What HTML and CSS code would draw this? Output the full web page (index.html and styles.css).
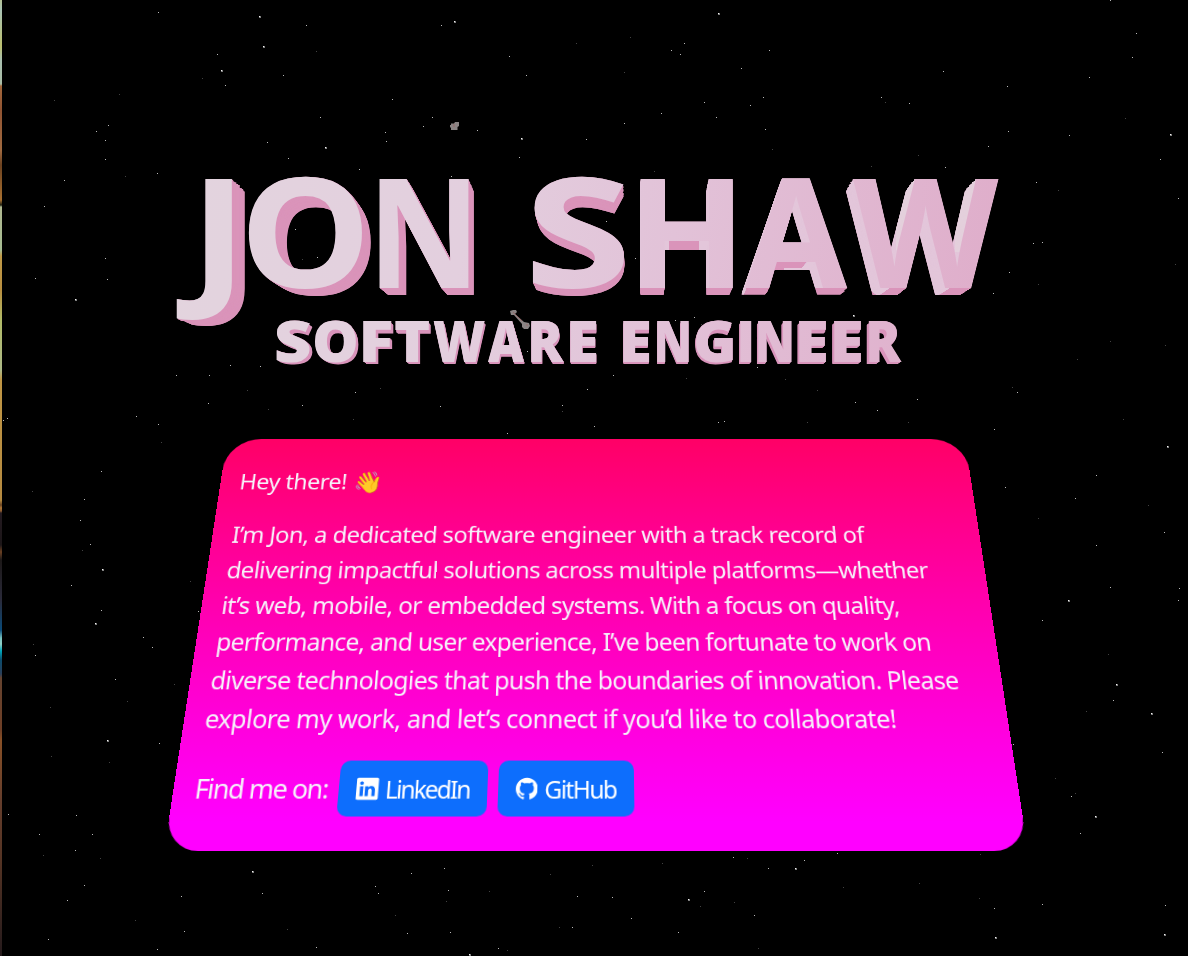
FILE: index.html
```html
<!DOCTYPE html>
<html lang="en">
<head>
<meta charset="utf-8">
<title>Jon Shaw - Software Engineer</title>
<link rel="stylesheet" href="styles.css">
</head>
<body>
<main class="space">
  <svg class="scene" viewBox="0 0 1188 956" width="1188" height="956" role="img" aria-label="JON SHAW SOFTWARE ENGINEER">
    <defs id="defs">
      <linearGradient id="face" gradientUnits="userSpaceOnUse" x1="180" y1="170" x2="1000" y2="300">
        <stop offset="0" stop-color="#e3d4de"/>
        <stop offset=".35" stop-color="#e3cfde"/>
        <stop offset=".6" stop-color="#e2c2d8"/>
        <stop offset="1" stop-color="#dfadca"/>
      </linearGradient>
      <clipPath id="leftFaces">
        <path d="M630 170H1000V241H630ZM630 241H669V288H630ZM699 241H768V288H699ZM768 241H1000V258H768ZM811 258H1000V288H784V268H802ZM704 288H698L700 295ZM746 288H740L743 296ZM791 288H780L783 296ZM889 288H868L878 296ZM949 288H928L937 296Z"/>
      </clipPath>
      <clipPath id="innerFaces">
        <path d="M896 170H928L916 250H896ZM955 170H986L970 252H955Z"/>
      </clipPath>
    </defs>
    <g id="stars" fill="#fff"></g>
    <g id="extrude"></g>
    <g id="extrudeLight" clip-path="url(#leftFaces)"></g>
    <g id="extrudeInner" clip-path="url(#innerFaces)"></g>
    <g id="fronts"></g>
    <g fill="#8b8484">
      <path d="M451 123.500H454L455 122H459V126L457.500 127V130H451V128L450 127V125H451Z"/>
      <path d="M510 311L513 310H516L517 312L515 314L524 322L529 323L530 326L528 329H524L522 327L522 324L514 315H511Z"/>
    </g>
    <path d="M454 124v3M513 312l9 9M526 325h2" stroke="#a05c5c" stroke-width="1" stroke-opacity=".6" fill="none"/>
  </svg>
  <div class="planet-edge"></div>
  <section class="card">
    <p class="line hey"><span class="fit" data-width="123">Hey there!</span> <span class="wave">👋</span></p>
    <div class="about">
      <p class="line"><span class="fit" data-width="712">I’m Jon, a dedicated software engineer with a track record of</span></p>
      <p class="line"><span class="fit" data-width="779">delivering impactful solutions across multiple platforms—whether</span></p>
      <p class="line"><span class="fit" data-width="742">it’s web, mobile, or embedded systems. With a focus on quality,</span></p>
      <p class="line"><span class="fit" data-width="771">performance, and user experience, I’ve been fortunate to work on</span></p>
      <p class="line"><span class="fit" data-width="795">diverse technologies that push the boundaries of innovation. Please</span></p>
      <p class="line"><span class="fit" data-width="725">explore my work, and let’s connect if you’d like to collaborate!</span></p>
    </div>
    <div class="links">
      <span class="find"><span class="fit" data-width="136">Find me on:</span></span>
      <a class="btn">
        <svg class="icon" viewBox="0 0 16 16"><path d="M0 1.146C0 .513.526 0 1.175 0h13.650C15.474 0 16 .513 16 1.146v13.708c0 .633-.526 1.146-1.175 1.146H1.175C.526 16 0 15.487 0 14.854V1.146zm4.943 12.248V6.169H2.542v7.225h2.401zm-1.200-8.212c.837 0 1.358-.554 1.358-1.248-.015-.709-.520-1.248-1.342-1.248-.822 0-1.359.540-1.359 1.248 0 .694.521 1.248 1.327 1.248h.016zm4.908 8.212V9.359c0-.216.016-.432.080-.586.173-.431.568-.878 1.232-.878.869 0 1.216.662 1.216 1.634v3.865h2.401V9.250c0-2.220-1.184-3.252-2.764-3.252-1.274 0-1.845.700-2.165 1.193v.025h-.016l.016-.025V6.169h-2.400c.030.678 0 7.225 0 7.225h2.400z"/></svg>
        <span class="fit" data-width="86.5">LinkedIn</span>
      </a>
      <a class="btn">
        <svg class="icon" viewBox="0 0 16 16"><path d="M8 0C3.580 0 0 3.580 0 8c0 3.540 2.290 6.530 5.470 7.590.4.070.550-.170.550-.380 0-.190-.010-.820-.010-1.490-2.010.370-2.530-.490-2.690-.940-.090-.230-.480-.940-.820-1.130-.280-.150-.680-.520-.010-.530.630-.010 1.080.580 1.230.820.720 1.210 1.870.870 2.330.660.070-.520.280-.870.510-1.070-1.780-.200-3.640-.890-3.640-3.950 0-.870.310-1.590.820-2.150-.080-.200-.360-1.020.080-2.120 0 0 .670-.210 2.200.820.640-.180 1.320-.270 2-.270s1.360.090 2 .270c1.530-1.040 2.200-.820 2.200-.820.440 1.100.160 1.920.080 2.120.510.560.820 1.270.820 2.150 0 3.070-1.870 3.750-3.650 3.950.290.250.540.730.540 1.480 0 1.070-.010 1.930-.010 2.200 0 .210.150.460.550.380A8.010 8.010 0 0 0 16 8c0-4.420-3.580-8-8-8z"/></svg>
        <span class="fit" data-width="73.5">GitHub</span>
      </a>
    </div>
  </section>
</main>
<script src="scene.js"></script>
</body>
</html>
```
FILE: styles.css
```css
html, body { margin: 0; background: #000; }
.space {
  width: 1188px; height: 956px; position: relative; overflow: hidden;
  background: #000; font-family: "Noto Sans", "Open Sans", sans-serif;
}
.scene { position: absolute; left: 0; top: 0; display: block; }
.scene text { font-family: "Open Sans", "Noto Sans", sans-serif; }
.planet-edge {
  position: absolute; left: 0; top: 0; width: 2px; height: 956px;
  background: linear-gradient(#b3c093 0, #a9c3b4 10px, #bcc070 46px, #a9c0b0 60px, #a9bda5 84px,
    #a3683c 86px, #915432 110px, #a06a40 150px, #6c4220 165px, #a87030 200px, #202010 205px,
    #b0b890 207px, #a6bc92 250px, #c09a48 256px, #b98f40 290px, #b2bb68 320px, #adb987 370px,
    #c09645 380px, #b58a40 500px, #6a4522 505px, #b07838 508px, #8a5a30 511px, #231a20 513px,
    #1c1618 545px, #6a4022 552px, #1c1818 560px, #2a2a3a 600px, #0a4a78 630px, #75c0bf 638px,
    #90cfc5 644px, #00a4b8 651px, #0b4c6c 660px, #2a3f5a 674px, #65432f 678px, #6e3f26 730px,
    #885026 740px, #653e2c 800px, #553424 860px, #251a1c 956px);
}
/* The card is tipped back, its lower edge nearest the viewer. */
.card {
  position: absolute; left: 163.600px; top: 439px; width: 864px; height: 470px;
  box-sizing: border-box; padding: 34.500px 22px 0; border-radius: 40px 40px 34px 34px;
  background: linear-gradient(#ff0066, #ff00ff 94%);
  color: #f6f2fa; font-size: 26.600px; line-height: 42.300px;
  transform-origin: 50% 0;
  transform: matrix3d(.8536,0,0,0, 0,.7483,0,-.0003115, 0,0,1,0, 0,0,0,1);
}
.line { margin: 0; height: 42.300px; white-space: nowrap; }
.hey { margin-bottom: 25.600px; }
.wave { font-family: "Noto Color Emoji", sans-serif; font-size: 27px; margin-left: 1px; }
.links { display: flex; align-items: center; margin-top: 23.300px; height: 57px; white-space: nowrap; }
.find { width: 147px; font-size: 27.500px; }
.btn {
  display: flex; align-items: center; gap: 7px; box-sizing: border-box; height: 57px;
  padding: 0 18px; margin-right: 11px; border-radius: 10px; background: #0d6efd; color: #fff;
  font-size: 25px;
}
.icon { width: 22.500px; height: 26px; fill: #fff; flex: none; }
```
FILE: scene.js
```js
const NS = 'http://www.w3.org/2000/svg';
const el = (tag, attrs, parent) => {
  const node = document.createElementNS(NS, tag);
  for (const key in attrs) node.setAttribute(key, attrs[key]);
  parent.appendChild(node);
  return node;
};
const byId = id => document.getElementById(id);

// Stars, as "x,y" pairs grouped by brightness.
const plain = `158,12 306,25 441,25 217,54 283,75 225,85 509,56 526,75 392,99 320,117 432,117 108,125 96,131 423,126 385,132 386,141 477,130 105,140 267,142 105,159 288,158 157,173 64,180 359,169 451,176 519,157 586,139 44,206 105,258 35,278 107,279 295,229 317,257 576,272 176,375 209,375 208,403 230,365 260,366 355,392 302,405 136,416 158,424 7,418 3,420 440,406 507,433 562,405 587,389 527,351
671,50 684,43 680,54 769,50 741,68 943,71 1007,86 1110,0 1136,33 1132,57 1089,77 704,102 661,113 716,117 750,105 763,97 881,97 909,103 624,123 765,129 1008,131 988,146 1069,135 1160,159 945,167 1036,182 1178,198 1033,243 1042,242 1009,272 993,293 606,221 635,258 675,320 694,317 757,367 613,375 855,402 877,410 917,399 1017,392 994,429 718,422 724,421 594,426
101,471 84,499 80,520 90,544 71,585 101,610 143,637 152,647 198,611 35,655 115,679 159,743 8,814 76,815 39,834 92,834 75,850 84,885 67,900 181,896 184,931 48,939 157,949
1096,475 1005,487 1075,498 1164,532 1096,545 1110,587 1179,588 1178,600 1042,620 1113,700 1013,744 1162,752 1071,796 1080,833 994,908 1042,904 1165,905
262,893 316,947 375,886 378,893 407,933 411,873 444,868 448,890 450,932 498,948 572,927 577,896 612,897 631,918 678,932 704,891 754,915 733,857 768,868 804,860 837,853`;
const bright = `259,16 454,21 263,46 221,70 521,138 325,147 75,299 718,13 1170,134 853,315 102,569 95,623 107,740 1167,446 1068,600 1116,684 1151,713 1095,816 995,937 1164,934 252,871 469,954 688,899 795,868`;
const dim = `202,78 316,51 576,43 119,94 54,100 125,176 302,259 247,390 268,409 562,411 353,419 380,388 630,37 624,72 885,102 772,149 1125,118 918,155 871,166 654,171 1058,190 1175,264 1038,284 701,324 686,378 785,379 817,390 1012,387 807,422 908,422 1123,419 1165,345 1110,341 1077,359 82,550 33,644 127,701 174,684 50,707 51,756 109,762 43,855 100,858 135,920 190,581 161,442 32,491 1148,505 1038,518 1108,654 1086,711 1055,778 1075,793 980,854 979,898 287,929 395,915 446,901 507,950 489,891 592,865 550,874 559,927 700,906 734,902 747,858 843,887 758,948 662,863 919,883`;
const scatter = (list, size, opacity) => list.trim().split(/\s+/).forEach(pair => {
  const [x, y] = pair.split(',');
  el('rect', { x, y, width: size, height: size, opacity }, byId('stars'));
});
scatter(plain, 1, .72);
scatter(bright, 2, .5);
scatter(bright, 1, .9);
scatter(dim, 1, .26);

// Letters: [character, left edge, right edge]. Each is fitted to its edges and
// gets the shared face gradient mapped back into its own coordinates.
const pen = document.createElement('canvas').getContext('2d');
const lay = (name, letters, size, baseline, weight) => {
  const shapes = el('g', { id: name }, byId('defs'));
  letters.forEach(([ch, left, right], i) => {
    pen.font = `${weight} ${size}px "Open Sans"`;
    const m = pen.measureText(ch);
    const sx = (right - left) / (m.actualBoundingBoxLeft + m.actualBoundingBoxRight);
    const tx = left + m.actualBoundingBoxLeft * sx;
    const attrs = { 'font-size': size, 'font-weight': weight,
      transform: `translate(${tx} ${baseline}) scale(${sx} 1)` };
    el('text', attrs, shapes).textContent = ch;
    el('linearGradient', { id: `${name}-${i}`, href: '#face',
      gradientTransform: `scale(${1 / sx} 1) translate(${-tx} ${-baseline})` }, byId('defs'));
    el('text', { ...attrs, fill: `url(#${name}-${i})` }, byId('fronts')).textContent = ch;
  });
};
lay('name', [['J', 176, 232], ['O', 248, 362.5], ['N', 379, 469], ['S', 533, 624],
  ['H', 640, 732.5], ['A', 745, 848], ['W', 853, 999]], 152.5, 288, 700);
lay('role', [['S', 276, 310], ['O', 314, 356], ['F', 363, 391], ['T', 395, 429], ['W', 433, 485],
  ['A', 488, 524], ['R', 531, 564], ['E', 570, 597], ['E', 623, 650], ['N', 657, 689], ['G', 695, 733],
  ['I', 740, 752], ['N', 758, 792], ['E', 799, 827], ['E', 834, 862], ['R', 869, 902]], 56, 361.5, 800);

// Depth: copies of the lettering shrinking towards the vanishing point.
const extrude = (target, source, steps, depthX, depthY, vx, vy, color) => {
  for (let i = steps; i > 0; i--) {
    const kx = 1 - depthX * i / steps, ky = 1 - depthY * i / steps;
    el('use', { href: '#' + source, fill: color,
      transform: `matrix(${kx} 0 0 ${ky} ${vx * (1 - kx)} ${vy * (1 - ky)})` }, byId(target));
  }
};
extrude('extrude', 'role', 6, .010, .025, 620, 445, '#d994bb');
extrude('extrude', 'name', 26, .032, .046, 636, 440, '#da94ba');
extrude('extrudeLight', 'name', 26, .032, .046, 636, 440, '#e3c6da');
extrude('extrudeInner', 'name', 26, .032, .046, 636, 440, '#e4d0dc');

// Tracks each run of text out to its set width.
document.querySelectorAll('.fit').forEach(span => {
  span.style.display = 'inline-block';
  const gap = (span.dataset.width - span.offsetWidth) / span.textContent.length;
  span.style.letterSpacing = gap + 'px';
});
```
